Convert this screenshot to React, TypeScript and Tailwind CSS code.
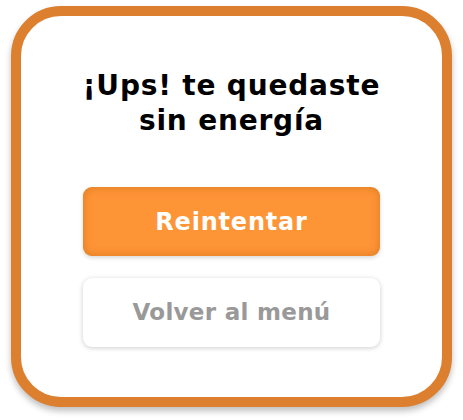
import React from 'react';

export default function App() {
  return (
    <div className="w-[463px] h-[420px] bg-white pt-[6px] px-[11px]" style={{ fontFamily: '"DejaVu Sans", sans-serif' }}>
      <div className="h-[401px] rounded-[50px] border-[10px] border-[#dc7f2f] bg-white shadow-[0_4px_6px_rgba(0,0,0,0.25)] flex flex-col items-center pt-[52px]">
        <h1 className="text-[28px] leading-[35px] font-bold text-black text-center tracking-[0.8px]">
          ¡Ups! te quedaste<br />sin energía
        </h1>
        <button className="mt-[49px] w-[297px] h-[69px] rounded-[9px] bg-[#fd9436] shadow-[inset_0_0_8px_rgba(180,90,10,0.45),0_2px_4px_rgba(0,0,0,0.15)] text-white text-[24px] font-bold tracking-[0.8px]">
          Reintentar
        </button>
        <button className="mt-[22px] w-[297px] h-[69px] rounded-[9px] bg-white shadow-[0_1px_5px_rgba(0,0,0,0.2)] text-[#999999] text-[23px] font-bold tracking-[0.3px]">
          Volver al menú
        </button>
      </div>
    </div>
  );
}
